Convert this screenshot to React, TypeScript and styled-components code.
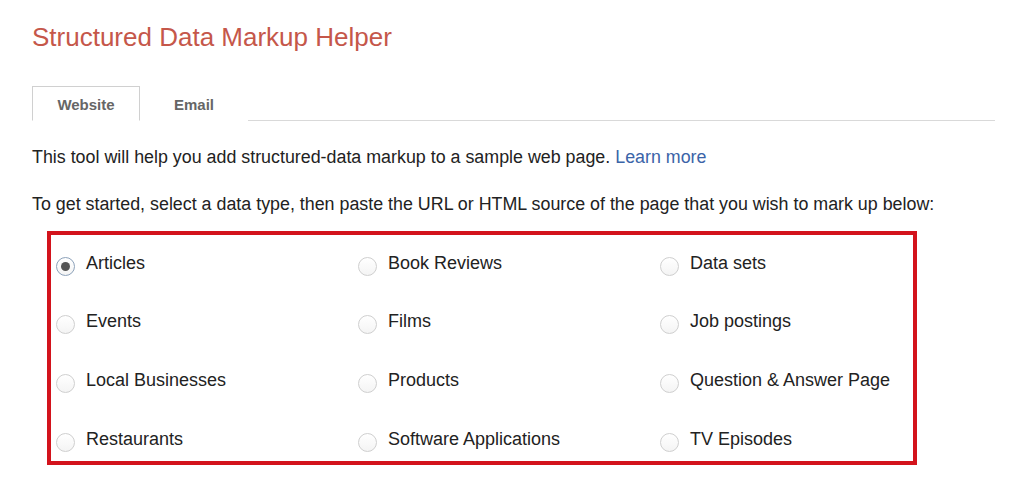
import styled, { createGlobalStyle } from "styled-components";
import { useState } from "react";

const GlobalStyle = createGlobalStyle`
  html, body {
    margin: 0;
    padding: 0;
    background: #fff;
  }
  body {
    font-family: "Liberation Sans", Arial, sans-serif;
    color: #222;
  }
`;

const Page = styled.div`
  padding: 22px 29px 0 32px;
`;

const Title = styled.h1`
  margin: 0;
  font-size: 26px;
  line-height: 30px;
  font-weight: normal;
  color: #c5574a;
`;

const TabBar = styled.div`
  display: flex;
  margin-top: 34px;
  border-bottom: 1px solid #d9d9d9;
`;

const Tab = styled.div<{ active?: boolean }>`
  width: 108px;
  height: 35px;
  box-sizing: border-box;
  display: flex;
  align-items: center;
  justify-content: center;
  padding-top: 1px;
  margin-bottom: -1px;
  font-size: 15px;
  font-weight: bold;
  color: #666;
  background: #fff;
  border: 1px solid ${(p) => (p.active ? "#d0d0d0" : "transparent")};
  border-bottom-color: ${(p) => (p.active ? "#fff" : "transparent")};
  cursor: pointer;
`;

const Para = styled.p`
  margin: 25px 0 0;
  font-size: 17.85px;
  line-height: 22px;
  color: #222;
`;

const Link = styled.a`
  color: #3b64a8;
  text-decoration: none;
`;

const Box = styled.div`
  margin: 16px 0 0 15px;
  width: 870px;
  box-sizing: border-box;
  border: 4px solid #d3131c;
  padding: 17px 0 11px 5px;
  display: grid;
  grid-template-columns: repeat(3, 302px);
  row-gap: 36.7px;
`;

const Option = styled.label`
  display: flex;
  align-items: center;
  gap: 11px;
  height: 22px;
  font-size: 18px;
  color: #222;
  cursor: pointer;
`;

const Radio = styled.span<{ checked?: boolean }>`
  width: 19px;
  height: 19px;
  box-sizing: border-box;
  border-radius: 50%;
  margin-top: 6px;
  flex: none;
  border: 1px solid ${(p) => (p.checked ? "#8da2ba" : "#cfcfcf")};
  background: linear-gradient(#fff, #f4f4f4);
  display: flex;
  align-items: center;
  justify-content: center;
  &::after {
    content: "";
    width: 9px;
    height: 9px;
    border-radius: 50%;
    background: ${(p) => (p.checked ? "#555" : "transparent")};
  }
`;

const types = [
  "Articles",
  "Book Reviews",
  "Data sets",
  "Events",
  "Films",
  "Job postings",
  "Local Businesses",
  "Products",
  "Question & Answer Page",
  "Restaurants",
  "Software Applications",
  "TV Episodes",
];

export default function App() {
  const [selected, setSelected] = useState("Articles");
  const [tab, setTab] = useState("Website");
  return (
    <Page>
      <GlobalStyle />
      <Title>Structured Data Markup Helper</Title>
      <TabBar>
        {["Website", "Email"].map((t) => (
          <Tab key={t} active={tab === t} onClick={() => setTab(t)}>
            {t}
          </Tab>
        ))}
      </TabBar>
      <Para>
        This tool will help you add structured-data markup to a sample web page.{" "}
        <Link href="#">Learn more</Link>
      </Para>
      <Para>
        To get started, select a data type, then paste the URL or HTML source of the page that
        you wish to mark up below:
      </Para>
      <Box>
        {types.map((t) => (
          <Option key={t} onClick={() => setSelected(t)}>
            <Radio checked={selected === t} />
            {t}
          </Option>
        ))}
      </Box>
    </Page>
  );
}
